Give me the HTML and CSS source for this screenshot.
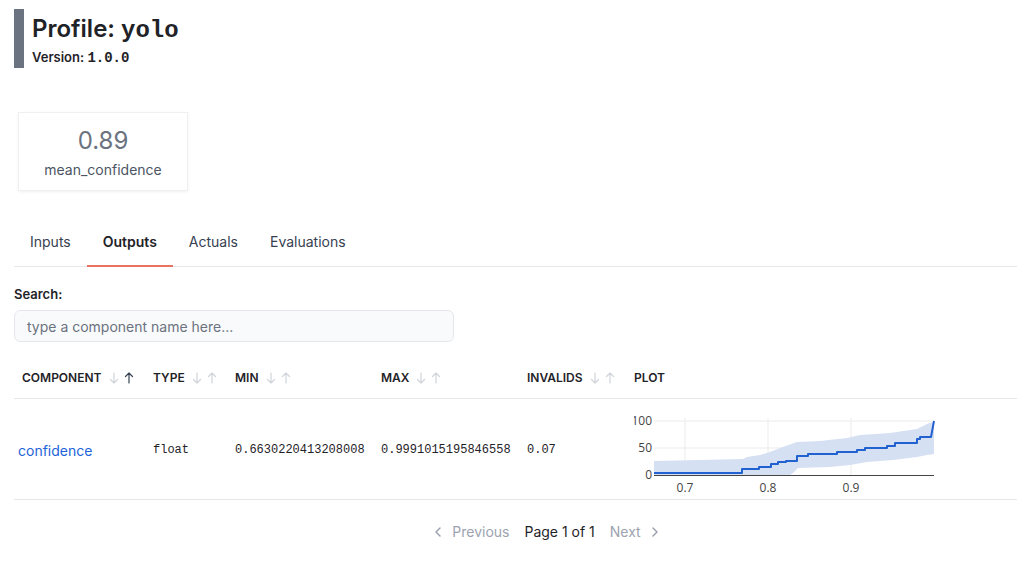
FILE: index.html
```html
<!DOCTYPE html>
<html lang="en">
<head>
<meta charset="utf-8">
<title>Profile: yolo</title>
<link rel="stylesheet" href="styles.css">
</head>
<body>
<main class="page">
  <header class="profile-head">
    <h1 class="title">Profile: <code class="mono">yolo</code></h1>
    <div class="version">Version: <code class="mono">1.0.0</code></div>
  </header>

  <section class="metrics">
    <div class="metric-card">
      <div class="metric-value">0.89</div>
      <div class="metric-label">mean_confidence</div>
    </div>
  </section>

  <nav class="tabs">
    <div class="tab">Inputs</div>
    <div class="tab active">Outputs</div>
    <div class="tab">Actuals</div>
    <div class="tab">Evaluations</div>
  </nav>

  <label class="search-label">Search:</label>
  <input class="search-input" type="text" placeholder="type a component name here...">

  <table class="comp-table">
    <colgroup>
      <col class="c1"><col class="c2"><col class="c3"><col class="c4"><col class="c5"><col class="c6">
    </colgroup>
    <thead>
      <tr>
        <th><span class="th-inner">Component
          <svg class="arr" viewBox="0 0 12 12"><path d="M6 1v10M2.5 7.5L6 11l3.5-3.5"/></svg>
          <svg class="arr on" viewBox="0 0 12 12"><path d="M6 11V1M2.5 4.5L6 1l3.5 3.5"/></svg></span></th>
        <th><span class="th-inner">Type
          <svg class="arr" viewBox="0 0 12 12"><path d="M6 1v10M2.5 7.5L6 11l3.5-3.5"/></svg>
          <svg class="arr" viewBox="0 0 12 12"><path d="M6 11V1M2.5 4.5L6 1l3.5 3.5"/></svg></span></th>
        <th><span class="th-inner">Min
          <svg class="arr" viewBox="0 0 12 12"><path d="M6 1v10M2.5 7.5L6 11l3.5-3.5"/></svg>
          <svg class="arr" viewBox="0 0 12 12"><path d="M6 11V1M2.5 4.5L6 1l3.5 3.5"/></svg></span></th>
        <th><span class="th-inner">Max
          <svg class="arr" viewBox="0 0 12 12"><path d="M6 1v10M2.5 7.5L6 11l3.5-3.5"/></svg>
          <svg class="arr" viewBox="0 0 12 12"><path d="M6 11V1M2.5 4.5L6 1l3.5 3.5"/></svg></span></th>
        <th><span class="th-inner">Invalids
          <svg class="arr" viewBox="0 0 12 12"><path d="M6 1v10M2.5 7.5L6 11l3.5-3.5"/></svg>
          <svg class="arr" viewBox="0 0 12 12"><path d="M6 11V1M2.5 4.5L6 1l3.5 3.5"/></svg></span></th>
        <th><span class="th-inner">Plot</span></th>
      </tr>
    </thead>
    <tbody>
      <tr>
        <td class="name"><a class="comp-link" href="#">confidence</a></td>
        <td class="mono-cell">float</td>
        <td class="mono-cell">0.6630220413208008</td>
        <td class="mono-cell">0.9991015195846558</td>
        <td class="mono-cell">0.07</td>
        <td class="plot-cell">
          <svg class="plot" width="310" height="94" viewBox="0 0 310 94">
            <g class="grid">
              <line x1="20" y1="18" x2="300" y2="18"/>
              <line x1="20" y1="45" x2="300" y2="45"/>
              <line x1="51" y1="15" x2="51" y2="72"/>
              <line x1="134" y1="15" x2="134" y2="72"/>
              <line x1="217" y1="15" x2="217" y2="72"/>
            </g>
            <path class="band" d="M20,58 L109,56 L113,54 L126,52 L136,49 L146,45 L163,39 L186,38 L213,35 L226,32 L256,30 L283,26 L293,21 L299,19 L300,17 L300,51 L293,52 L283,54 L259,57 L233,59 L216,62 L196,64 L164,65 L159,70 L156,72 L20,72 Z"/>
            <line class="axis" x1="20" y1="72.5" x2="300" y2="72.5"/>
            <path class="curve" d="M20,70 H108 V66 H125 V64 H137 V61 H144 V59 H152 V58 H163 V53 H174 V51 H203 V49 H223 V47 H231 V45 H253 V43 H261 V40 H283 V36 H286 V34 H297 L300,18"/>
            <g class="ylab">
              <text x="18" y="22">100</text>
              <text x="18" y="49">50</text>
              <text x="18" y="76">0</text>
            </g>
            <g class="xlab">
              <text x="51" y="89">0.7</text>
              <text x="134" y="89">0.8</text>
              <text x="217" y="89">0.9</text>
            </g>
          </svg>
        </td>
      </tr>
    </tbody>
  </table>

  <div class="pager">
    <span class="pager-btn disabled"><svg class="chev" viewBox="0 0 8 12"><path d="M6 2L2 6l4 4"/></svg>Previous</span>
    <span class="pager-info">Page 1 of 1</span>
    <span class="pager-btn disabled">Next<svg class="chev" viewBox="0 0 8 12"><path d="M2 2l4 4-4 4"/></svg></span>
  </div>
</main>
</body>
</html>
```
FILE: styles.css
```css
html, body {
  margin: 0;
  padding: 0;
  overflow: hidden;
  background: #ffffff;
}

body {
  font-family: Inter, "Noto Sans", "Liberation Sans", sans-serif;
  color: #1f2937;
}

.page {
  width: 1065px;
  padding: 9px 0 0 14px;
  box-sizing: content-box;
}

.mono {
  font-family: "Liberation Mono", "DejaVu Sans Mono", monospace;
  font-weight: 700;
  line-height: 1;
}

.profile-head {
  border-left: 10px solid #6b7280;
  padding: 2px 0 1px 8px;
}

.title {
  margin: 0;
  font-size: 24px;
  line-height: 36px;
  height: 36px;
  font-weight: 600;
  color: #1f2328;
}

.title .mono {
  font-size: 24px;
}

.version {
  font-size: 13px;
  line-height: 20px;
  height: 20px;
  font-weight: 600;
  color: #1f2328;
}

.version .mono {
  font-size: 14px;
  font-weight: 700;
}

.metrics {
  display: flex;
  margin-top: 44px;
  padding-left: 4px;
}

.metric-card {
  width: 170px;
  box-sizing: border-box;
  padding: 12px 0 10px;
  text-align: center;
  border: 1px solid #f0f0f0;
  box-shadow: 0 1px 3px rgba(0, 0, 0, 0.06);
  background: #fff;
}

.metric-value {
  font-size: 24px;
  line-height: 32px;
  color: #6b7280;
}

.metric-label {
  font-size: 14px;
  line-height: 20px;
  margin-top: 3px;
  color: #4b5563;
}

.tabs {
  display: flex;
  margin-top: 30px;
  border-bottom: 1px solid #e5e7eb;
}

.tab {
  padding: 11px 16px 13px;
  font-size: 14px;
  line-height: 20px;
  color: #374151;
  border-bottom: 2px solid transparent;
  margin-bottom: -1px;
}

.tab.active {
  font-weight: 600;
  color: #1f2328;
  border-bottom-color: #e8735e;
}

.search-label {
  display: block;
  margin-top: 17px;
  font-size: 13px;
  line-height: 20px;
  font-weight: 600;
  color: #1f2328;
}

.search-input {
  display: block;
  margin-top: 6px;
  width: 440px;
  height: 32px;
  box-sizing: border-box;
  padding: 0 12px;
  border: 1px solid #e5e7eb;
  border-radius: 6px;
  background: #f9fafb;
  font-family: inherit;
  font-size: 14px;
  color: #111827;
  outline: none;
}

.search-input::placeholder {
  color: #6b7280;
}

.comp-table {
  margin-top: 16px;
  width: 1065px;
  border-collapse: collapse;
  table-layout: fixed;
}

.c1 { width: 131px; }
.c2 { width: 82px; }
.c3 { width: 146px; }
.c4 { width: 146px; }
.c5 { width: 107px; }

.comp-table th {
  text-align: left;
  padding: 12px 8px;
  font-size: 12px;
  line-height: 16px;
  font-weight: 600;
  text-transform: uppercase;
  color: #1f2328;
  border-bottom: 1px solid #e5e7eb;
  white-space: nowrap;
}

.th-inner {
  display: inline-flex;
  align-items: center;
  height: 16px;
}

.arr {
  width: 12px;
  height: 12px;
  fill: none;
  stroke: #d1d5db;
  stroke-width: 1.2;
  stroke-linecap: round;
  stroke-linejoin: round;
  margin-left: 3px;
}

.arr:first-of-type {
  margin-left: 6px;
}

.arr.on {
  stroke: #374151;
}

.comp-table td {
  padding: 4px 8px 2px;
  vertical-align: middle;
  border-bottom: 1px solid #e5e7eb;
  white-space: nowrap;
  line-height: 20px;
}

.comp-table td.name {
  padding-left: 4px;
}

.comp-link {
  color: #1d64d8;
  text-decoration: none;
  font-size: 14px;
}

.mono-cell {
  font-family: "Liberation Mono", "DejaVu Sans Mono", monospace;
  font-size: 12px;
  color: #1f2328;
}

.plot-cell {
  height: 94px;
}

.plot {
  display: block;
  overflow: hidden;
}

.plot .grid line {
  stroke: #ebebeb;
  stroke-width: 1;
}

.plot .band {
  fill: #d6e0f3;
}

.plot .axis {
  stroke: #444;
  stroke-width: 1;
}

.plot .curve {
  fill: none;
  stroke: #2261d0;
  stroke-width: 2;
  stroke-linejoin: round;
}

.plot text {
  font-family: "Open Sans", "Liberation Sans", sans-serif;
  font-size: 12px;
  fill: #444;
}

.plot .ylab text {
  text-anchor: end;
}

.plot .xlab text {
  text-anchor: middle;
}

.pager {
  display: flex;
  justify-content: center;
  align-items: center;
  gap: 15px;
  padding-top: 22px;
  font-size: 14px;
  line-height: 20px;
}

.pager-btn {
  display: inline-flex;
  align-items: center;
  gap: 10px;
  color: #9ca3af;
}

.pager-info {
  color: #1f2328;
}

.chev {
  width: 8px;
  height: 12px;
  fill: none;
  stroke: #9ca3af;
  stroke-width: 1.5;
  stroke-linecap: round;
  stroke-linejoin: round;
}
```
